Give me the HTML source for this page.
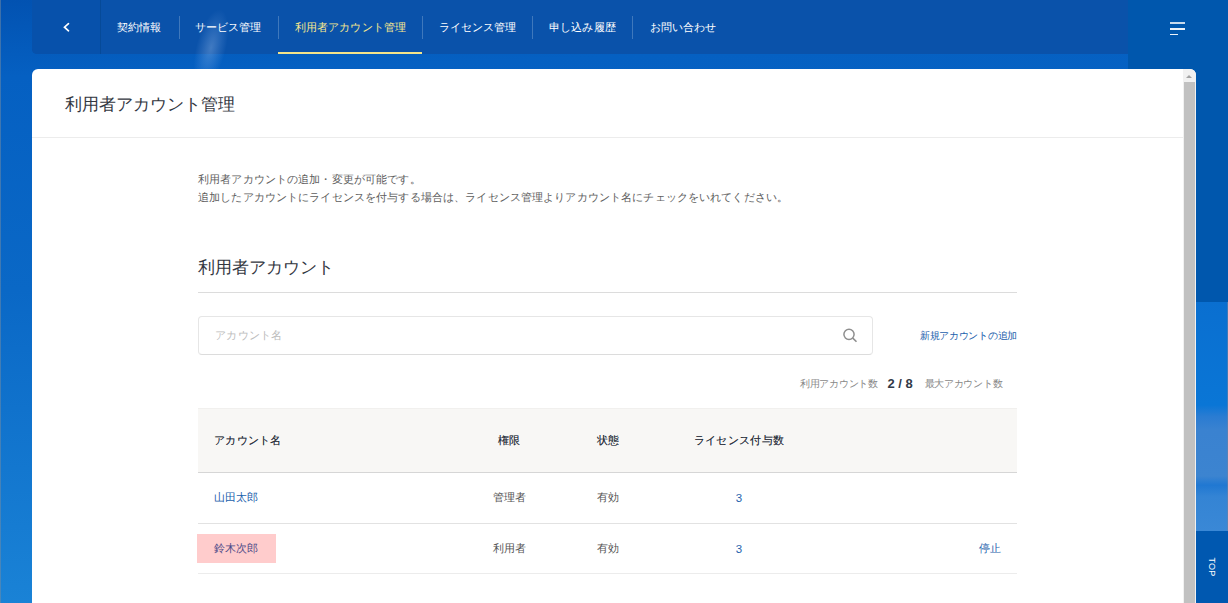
<!DOCTYPE html>
<html lang="ja">
<head>
<meta charset="utf-8">
<style>
*{box-sizing:border-box;margin:0;padding:0}
html,body{width:1228px;height:603px;overflow:hidden}
body{font-family:"Liberation Sans",sans-serif;position:relative;
background:linear-gradient(178deg,#0252b1 0%,#0560c2 12%,#0a68c6 45%,#1c86d8 100%);}
.abs{position:absolute}
#nav{left:32px;top:0;width:1096px;height:54px;background:#0a52aa;border-radius:0 0 0 5px}
#back{left:32px;top:0;width:69px;height:54px;background:#0751ab;border-radius:0 0 0 5px;border-right:1px solid #064a98}
#back span{position:absolute;left:32px;top:23.5px;width:6.5px;height:6.5px;border-left:2px solid #fff;border-bottom:2px solid #fff;transform:rotate(45deg)}
.ni{top:0;height:54px;line-height:54px;color:#fff;font-size:11px;letter-spacing:0.14px;text-align:center;white-space:nowrap}
.sep{top:16px;width:1px;height:23px;background:rgba(255,255,255,0.22)}
#rcol{left:1128px;top:0;width:100px;height:302px;background:#0057ad}
#rsky{left:1196px;top:302px;width:32px;height:229px;background:linear-gradient(180deg,#0a6fd0 0%,#0a76d6 45%,#2a7cd2 50%,#3a82d0 56%,#3c84d0 76%,#2078d2 80%,#3484d4 85%,#3a88d6 100%)}
#top{left:1196px;top:531px;width:32px;height:72px;background:#0058b0}
#top span{position:absolute;left:4px;top:30px;width:24px;text-align:center;color:#fff;font-size:9px;letter-spacing:0.2px;transform:rotate(90deg);line-height:12px}
.hb{left:1170px;height:1.8px;background:rgba(255,255,255,0.92)}
#panel{left:32px;top:69px;width:1164px;height:560px;background:#fff;border-radius:6px 6px 0 0;overflow:hidden}
#sb{left:1151px;top:0;width:13px;height:560px;background:#f1f1f1}
#sbth{left:1152px;top:13px;width:11px;height:540px;background:#c1c1c1}
#sbar{left:1154px;top:6px;width:0;height:0;border-left:3.5px solid transparent;border-right:3.5px solid transparent;border-bottom:3.5px solid #a3a3a3}
.th{font-size:11px;line-height:14px;color:#2a303c;letter-spacing:0.3px;text-shadow:0 0 0.5px rgba(40,48,60,0.6);white-space:nowrap}
.td{font-size:11px;line-height:14px;color:#555;white-space:nowrap}
</style>
</head>
<body>
<div class="abs" style="left:0;top:0;width:1px;height:603px;background:rgba(120,140,160,0.5)"></div>
<div id="nav" class="abs"></div>
<div class="abs" style="left:196px;top:8px;width:30px;height:80px;border-radius:50%;background:radial-gradient(ellipse at center,rgba(190,215,250,0.3) 0%,rgba(160,195,245,0.12) 45%,rgba(150,190,240,0) 70%);transform:rotate(14deg)"></div>
<div id="back" class="abs"></div>
<svg class="abs" style="left:55.5px;top:15px" width="20" height="24" viewBox="0 0 20 24"><polyline points="12.5,8.7 8.5,12.2 12.5,15.8" fill="none" stroke="#fff" stroke-width="1.7" stroke-linecap="round" stroke-linejoin="miter"/></svg>
<div class="abs ni" style="left:100px;width:78px">契約情報</div>
<div class="abs sep" style="left:179px"></div>
<div class="abs ni" style="left:179px;width:98px">サービス管理</div>
<div class="abs sep" style="left:278px"></div>
<div class="abs ni" style="left:279px;width:143px;color:#f6e88e">利用者アカウント管理</div>
<div class="abs" style="left:278px;top:52px;width:144px;height:2px;background:#f3e48a"></div>
<div class="abs sep" style="left:422px"></div>
<div class="abs ni" style="left:423px;width:109px">ライセンス管理</div>
<div class="abs sep" style="left:532px"></div>
<div class="abs ni" style="left:533px;width:99px">申し込み履歴</div>
<div class="abs sep" style="left:632px"></div>
<div class="abs ni" style="left:633px;width:100px">お問い合わせ</div>
<div id="rcol" class="abs"></div>
<div class="abs hb" style="top:22px;width:15px;height:2px;background:rgba(255,255,255,0.78)"></div>
<div class="abs hb" style="top:27.9px;width:15px"></div>
<div class="abs hb" style="top:33.6px;width:7.5px;height:1.6px"></div>
<div id="rsky" class="abs"></div>
<div class="abs" style="left:1227px;top:302px;width:1px;height:229px;background:rgba(110,130,160,0.55)"></div>
<div id="top" class="abs"><span>TOP</span></div>

<div id="panel" class="abs">
  <div class="abs" style="left:33px;top:26px;font-size:17px;line-height:20px;color:#33373f;white-space:nowrap">利用者アカウント管理</div>
  <div class="abs" style="left:0;top:68px;width:1151px;height:1px;background:#ececec"></div>
  <div class="abs" style="left:166px;top:101px;font-size:11px;letter-spacing:0.135px;line-height:18px;color:#5e5e5e;white-space:nowrap">利用者アカウントの追加・変更が可能です。<br>追加したアカウントにライセンスを付与する場合は、ライセンス管理よりアカウント名にチェックをいれてください。</div>
  <div class="abs" style="left:166px;top:189px;font-size:17px;line-height:20px;color:#33373f;white-space:nowrap">利用者アカウント</div>
  <div class="abs" style="left:166px;top:223px;width:819px;height:1px;background:#dcdcdc"></div>
  <div class="abs" style="left:166px;top:247px;width:675px;height:39px;border:1px solid #e6e6e6;border-bottom-color:#dcdcdc;border-radius:4px"></div>
  <div class="abs" style="left:183px;top:259px;font-size:11px;letter-spacing:0.3px;line-height:14px;color:#bcbcbc;white-space:nowrap">アカウント名</div>
  <svg class="abs" style="left:808px;top:256px" width="20" height="20" viewBox="0 0 20 20"><circle cx="9" cy="9.3" r="5.1" fill="none" stroke="#8e8e8e" stroke-width="1.5"/><line x1="12.8" y1="13.1" x2="16.5" y2="16.8" stroke="#8e8e8e" stroke-width="1.6"/></svg>
  <div class="abs" style="left:886px;top:260px;width:99px;text-align:right;font-size:10px;letter-spacing:-0.3px;line-height:14px;color:#1b60ac;white-space:nowrap">新規アカウントの追加</div>
  <div class="abs" style="left:768px;top:306px;font-size:10px;letter-spacing:-0.27px;line-height:18px;color:#888;white-space:nowrap">利用アカウント数</div>
  <div class="abs" style="left:855.5px;top:306px;font-size:13px;line-height:18px;color:#323a48;font-weight:bold;white-space:nowrap">2 / 8</div>
  <div class="abs" style="left:892.5px;top:306px;font-size:10px;letter-spacing:-0.27px;line-height:18px;color:#888;white-space:nowrap">最大アカウント数</div>
  <div class="abs" style="left:166px;top:339px;width:819px;height:65px;background:#f8f7f5;border-top:1px solid #f1f0ee;border-bottom:1px solid #d6d6d6"></div>
  <div class="abs th" style="left:182px;top:364px">アカウント名</div>
  <div class="abs th" style="left:427px;top:364px;width:100px;text-align:center">権限</div>
  <div class="abs th" style="left:565px;top:364px">状態</div>
  <div class="abs th" style="left:657px;top:364px;width:100px;text-align:center">ライセンス付与数</div>
  <div class="abs" style="left:166px;top:454px;width:819px;height:1px;background:#e2e2e2"></div>
  <div class="abs" style="left:166px;top:504px;width:819px;height:1px;background:#ececec"></div>
  <div class="abs td" style="left:182px;top:421px;color:#1b60ac">山田太郎</div>
  <div class="abs td" style="left:427px;top:421px;width:100px;text-align:center">管理者</div>
  <div class="abs td" style="left:565px;top:421px">有効</div>
  <div class="abs td" style="left:657px;top:421px;width:100px;text-align:center;color:#2563ad;font-size:11.5px;padding-top:0.5px">3</div>
  <div class="abs td" style="left:182px;top:472px;color:#1b60ac">鈴木次郎</div>
  <div class="abs" style="left:165px;top:465px;width:79px;height:29px;background:rgba(255,0,0,0.2)"></div>
  <div class="abs td" style="left:427px;top:472px;width:100px;text-align:center">利用者</div>
  <div class="abs td" style="left:565px;top:472px">有効</div>
  <div class="abs td" style="left:657px;top:472px;width:100px;text-align:center;color:#2563ad;font-size:11.5px;padding-top:0.5px">3</div>
  <div class="abs td" style="left:947px;top:472px;color:#1b60ac">停止</div>
  <div id="sb" class="abs"></div>
  <div id="sbth" class="abs"></div>
  <div id="sbar" class="abs"></div>
</div>
</body>
</html>
